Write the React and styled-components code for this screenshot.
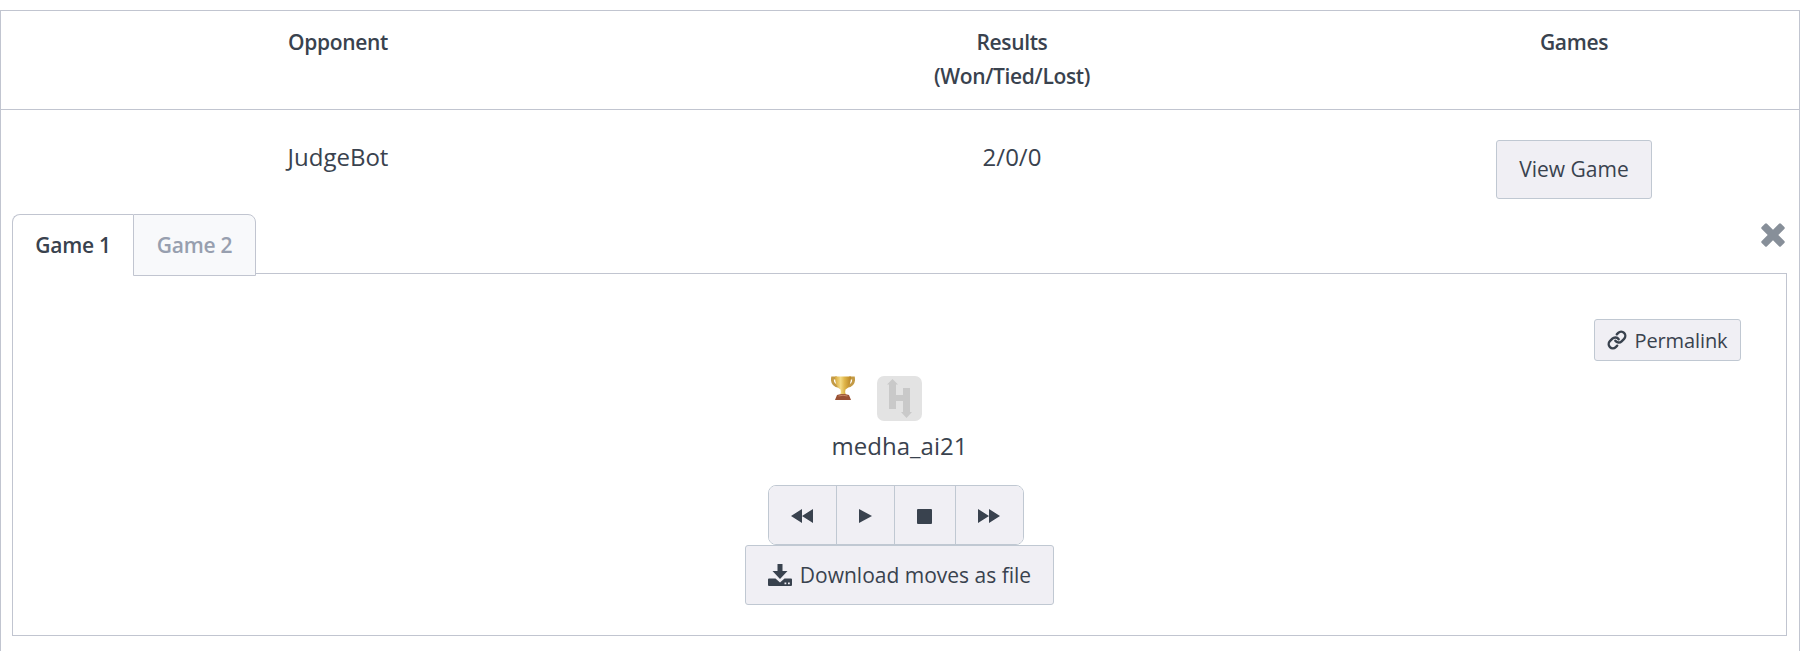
import React from 'react';
import styled, { createGlobalStyle, css } from 'styled-components';
import { Link } from 'lucide-react';

const line = '#c1c5d0';
const ink = '#39424e';

const Global = createGlobalStyle`
  * { box-sizing: border-box; }
  body {
    margin: 0;
    background: #fff;
    color: ${ink};
    font-family: 'Open Sans', 'Noto Sans', sans-serif;
    overflow: hidden;
  }
`;

const Table = styled.main`
  width: 1800px;
  height: 651px;
  padding-top: 10px;
`;

const Row = styled.div`
  display: grid;
  grid-template-columns: 674px 674px 450px;
  text-align: center;
`;

const HeaderRow = styled(Row)`
  height: 99px;
  padding-top: 14px;
  border: 1px solid ${line};
  border-bottom: 0;
  font-size: 21px;
  line-height: 34px;
  font-weight: 600;
  letter-spacing: -0.35px;
`;

const Body = styled.section`
  height: 542px;
  border: 1px solid ${line};
  border-bottom: 0;
  padding: 0 12px 0 11px;
`;

const ResultRow = styled(Row)`
  height: 104px;
  margin: 0 -12px 0 -11px;
  padding-top: 30px;
  font-size: 24px;
  line-height: 34px;
`;

const Button = styled.button`
  display: inline-flex;
  align-items: center;
  justify-content: center;
  width: ${(p) => p.$w}px;
  height: ${(p) => p.$h || 60}px;
  padding: 0 0 1px;
  border: 1px solid #c0c8d2;
  border-radius: 3px;
  background: #f0eff4;
  color: ${ink};
  font: 400 ${(p) => p.$size || 21}px 'Open Sans', 'Noto Sans', sans-serif;
`;

const TabBar = styled.div`
  display: flex;
  align-items: flex-start;
  height: 59px;
`;

const Tab = styled.div`
  height: 62px;
  width: ${(p) => p.$w}px;
  padding-top: 13px;
  text-align: center;
  font-size: 21px;
  line-height: 34px;
  font-weight: 600;
  letter-spacing: -0.25px;
  position: relative;
  border: 1px solid ${line};
  ${(p) =>
    p.$active
      ? css`
          background: #fff;
          border-right: 0;
          border-bottom: 0;
          border-radius: 8px 0 0 0;
        `
      : css`
          background: #f8f9fb;
          color: #979faf;
          border-radius: 0 8px 0 0;
        `}
`;

const CloseIcon = styled.svg`
  width: 24px;
  height: 24px;
  margin: 9px 2px 0 auto;
  fill: #878f99;
`;

const Panel = styled.div`
  display: flex;
  flex-direction: column;
  align-items: center;
  height: 363px;
  padding: 45px 45px 0;
  border: 1px solid ${line};
`;

const Permalink = styled(Button)`
  align-self: flex-end;
  gap: 7px;
  padding-bottom: 0;
  letter-spacing: -0.1px;
`;

const Winner = styled.div`
  display: flex;
  align-items: flex-start;
  gap: 22px;
  height: 45px;
  margin: 15px 47px 0 0;
`;

const Trophy = styled.svg`
  width: 24px;
  height: 24px;
`;

const Avatar = styled.svg`
  width: 45px;
  height: 45px;
`;

const Player = styled.div`
  height: 50px;
  margin-bottom: 14px;
  font-size: 24px;
  line-height: 50px;
`;

const Controls = styled.div`
  display: flex;
  width: 256px;
  height: 60px;
  margin-right: 8px;
  overflow: hidden;
  border: 1px solid #c0c8d2;
  border-radius: 8px;
`;

const Control = styled.button`
  display: grid;
  place-items: center;
  width: ${(p) => p.$w}px;
  padding: 2px 0 0;
  border: 0;
  background: #f0eff4;
  & + & {
    border-left: 1px solid #c0c8d2;
  }
  svg {
    fill: ${ink};
  }
`;

const Download = styled(Button)`
  gap: 8px;
  padding-bottom: 0;
`;

const games = ['Game 1', 'Game 2'];

export default function App() {
  return (
    <>
      <Global />
      <Table>
        <HeaderRow>
          <div>Opponent</div>
          <div>Results<br />(Won/Tied/Lost)</div>
          <div>Games</div>
        </HeaderRow>
        <Body>
          <ResultRow>
            <div>JudgeBot</div>
            <div>2/0/0</div>
            <div><Button $w={156} $h={59}>View Game</Button></div>
          </ResultRow>
          <TabBar>
            {games.map((g, i) => (
              <Tab key={g} $w={i ? 123 : 121} $active={i === 0}>{g}</Tab>
            ))}
            <CloseIcon viewBox="0 0 24 24">
              <path d="M6 .7 12 6.700 18 .7q1-1 2 0l3.300 3.300q1 1 0 2L17.300 12l6 6q1 1 0 2L20 23.300q-1 1-2 0l-6-6-6 6q-1 1-2 0L.7 20q-1-1 0-2l6-6L.7 6q-1-1 0-2L4 .7q1-1 2 0Z" />
            </CloseIcon>
          </TabBar>
          <Panel>
            <Permalink $w={147} $h={42} $size={20}>
              <Link size={20} strokeWidth={2.9} />
              Permalink
            </Permalink>
            <Winner>
              <Trophy viewBox="0 0 24 24">
                <defs>
                  <linearGradient id="gold">
                    <stop offset="0" stopColor="#d9a93c" />
                    <stop offset=".35" stopColor="#f3da84" />
                    <stop offset=".6" stopColor="#dfb548" />
                    <stop offset="1" stopColor="#b98525" />
                  </linearGradient>
                </defs>
                <path d="M6 2H1.500Q0.500 9 8 10.500M18 2h4.500Q23.500 9 16 10.500" fill="none" stroke="#c39a45" strokeWidth="2.800" />
                <path d="M4 .5h16q0 10-5.500 13-1 2 .5 6H9q1.500-4 .5-6Q4 10.500 4 .5" fill="url(#gold)" />
                <path d="M6 19q6-2 12 0l2 5H4Z" fill="#9a5134" />
                <path d="M7.500 20q4.500-1.500 9 0" fill="none" stroke="#c98a63" />
              </Trophy>
              <Avatar viewBox="0 0 45 45">
                <rect width="45" height="45" rx="7" fill="#e3e3e3" />
                <path d="M15.500 3 21 8.500h-2V19h7v-7h7v24h2l-5.500 6-5.500-6h2V25h-7v8h-7V8.500h-2Z" fill="#c9c9c9" />
              </Avatar>
            </Winner>
            <Player>medha_ai21</Player>
            <Controls>
              <Control $w={67}><svg width="22" height="14" viewBox="0 0 22 14"><path d="M11 0v14L0 7ZM22 0v14L11 7Z" /></svg></Control>
              <Control $w={58}><svg width="13" height="14" viewBox="0 0 13 14"><path d="M0 0 13 7 0 14Z" /></svg></Control>
              <Control $w={61}><svg width="15" height="15" viewBox="0 0 15 15"><rect width="15" height="15" rx="1" /></svg></Control>
              <Control $w={68}><svg width="22" height="14" viewBox="0 0 22 14"><path d="M0 0 11 7 0 14ZM11 0 22 7 11 14Z" /></svg></Control>
            </Controls>
            <Download $w={309}>
              <svg width="24" height="22" viewBox="0 0 24 22" fill={ink}>
                <path d="M9.500 0h5v7h5L12 15 4.500 7h5ZM1 14.500h6.500L12 18.500l4.500-4H23q1 0 1 1V21q0 1-1 1H1q-1 0-1-1v-5.500q0-1 1-1M16.500 18.500v1.800h1.800v-1.800ZM20 18.500v1.800h1.800v-1.800Z" fillRule="evenodd" />
              </svg>
              Download moves as file
            </Download>
          </Panel>
        </Body>
      </Table>
    </>
  );
}
